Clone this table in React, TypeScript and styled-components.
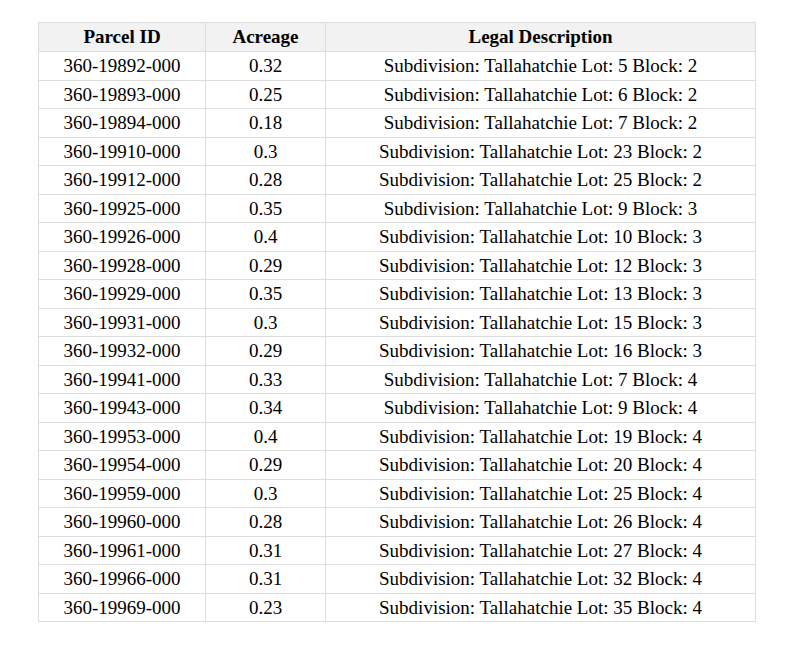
import styled, { createGlobalStyle } from "styled-components";

type Parcel = { id: string; acreage: string; lot: number; block: number };

const parcels: Parcel[] = [
  { id: "360-19892-000", acreage: "0.32", lot: 5, block: 2 },
  { id: "360-19893-000", acreage: "0.25", lot: 6, block: 2 },
  { id: "360-19894-000", acreage: "0.18", lot: 7, block: 2 },
  { id: "360-19910-000", acreage: "0.3", lot: 23, block: 2 },
  { id: "360-19912-000", acreage: "0.28", lot: 25, block: 2 },
  { id: "360-19925-000", acreage: "0.35", lot: 9, block: 3 },
  { id: "360-19926-000", acreage: "0.4", lot: 10, block: 3 },
  { id: "360-19928-000", acreage: "0.29", lot: 12, block: 3 },
  { id: "360-19929-000", acreage: "0.35", lot: 13, block: 3 },
  { id: "360-19931-000", acreage: "0.3", lot: 15, block: 3 },
  { id: "360-19932-000", acreage: "0.29", lot: 16, block: 3 },
  { id: "360-19941-000", acreage: "0.33", lot: 7, block: 4 },
  { id: "360-19943-000", acreage: "0.34", lot: 9, block: 4 },
  { id: "360-19953-000", acreage: "0.4", lot: 19, block: 4 },
  { id: "360-19954-000", acreage: "0.29", lot: 20, block: 4 },
  { id: "360-19959-000", acreage: "0.3", lot: 25, block: 4 },
  { id: "360-19960-000", acreage: "0.28", lot: 26, block: 4 },
  { id: "360-19961-000", acreage: "0.31", lot: 27, block: 4 },
  { id: "360-19966-000", acreage: "0.31", lot: 32, block: 4 },
  { id: "360-19969-000", acreage: "0.23", lot: 35, block: 4 },
];

export default function App() {
  return (
    <>
      <GlobalStyle />
      <S.Page>
        <S.Table>
          <colgroup>
            <col style={{ width: 167 }} />
            <col style={{ width: 120 }} />
            <col />
          </colgroup>
          <thead>
            <tr>
              <S.Th>Parcel ID</S.Th>
              <S.Th>Acreage</S.Th>
              <S.Th>Legal Description</S.Th>
            </tr>
          </thead>
          <tbody>
            {parcels.map((p) => (
              <tr key={p.id}>
                <S.Td>{p.id}</S.Td>
                <S.Td>{p.acreage}</S.Td>
                <S.Td>
                  Subdivision: Tallahatchie Lot: {p.lot} Block: {p.block}
                </S.Td>
              </tr>
            ))}
          </tbody>
        </S.Table>
      </S.Page>
    </>
  );
}

const GlobalStyle = createGlobalStyle`
  body {
    margin: 0;
    background: #ffffff;
    font-family: "Liberation Serif", "Times New Roman", serif;
    color: #000;
  }
`;

const S = {
  Page: styled.div`
    padding: 22px 0 0 38px;
  `,
  Table: styled.table`
    width: 718px;
    border-collapse: collapse;
    table-layout: fixed;
    font-size: 19px;
  `,
  Th: styled.th`
    background: #f2f2f2;
    border: 1px solid #dddddd;
    padding: 3px 8px;
    line-height: 22px;
    font-weight: bold;
    text-align: center;
  `,
  Td: styled.td`
    border: 1px solid #dddddd;
    padding: 3px 8px;
    line-height: 21.5px;
    text-align: center;
    white-space: nowrap;
  `,
};
